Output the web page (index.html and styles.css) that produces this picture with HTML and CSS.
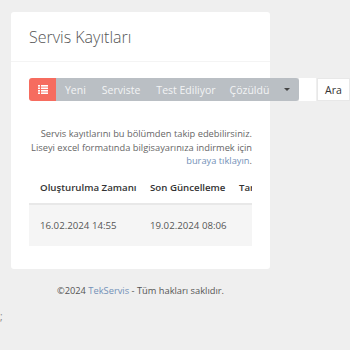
FILE: index.html
```html
<!DOCTYPE html>
<html lang="tr">
<head>
  <meta charset="UTF-8">
  <title>Servis Kayıtları</title>
  <link rel="stylesheet" href="styles.css">
</head>
<body>
  <div class="page">
    <div class="card">
      <div class="card-head">
        <h2>Servis Kayıtları</h2>
      </div>
      <div class="card-body">
        <div class="toolbar">
          <span class="tb-icon">
            <svg width="10" height="9" viewBox="0 0 10 9"><rect x="0" y="0" width="2" height="1.6" fill="#fff"/><rect x="3" y="0" width="7" height="1.6" fill="#fff"/><rect x="0" y="2.5" width="2" height="1.6" fill="#fff"/><rect x="3" y="2.5" width="7" height="1.6" fill="#fff"/><rect x="0" y="5" width="2" height="1.6" fill="#fff"/><rect x="3" y="5" width="7" height="1.6" fill="#fff"/><rect x="0" y="7.4" width="2" height="1.6" fill="#fff"/><rect x="3" y="7.4" width="7" height="1.6" fill="#fff"/></svg>
          </span>
          <div class="tb-tabs">
            <span class="tb-tab">Yeni</span>
            <span class="tb-tab">Serviste</span>
            <span class="tb-tab">Test Ediliyor</span>
            <span class="tb-tab">Çözüldü</span>
            <span class="tb-caret"></span>
          </div>
          <span class="tb-input"></span>
          <span class="tb-search">Ara</span>
        </div>

        <p class="info">
          Servis kayıtlarını bu bölümden takip edebilirsiniz.<br>
          Liseyi excel formatında bilgisayarınıza indirmek için<br>
          <a href="#">buraya tıklayın</a>.
        </p>

        <div class="table-wrap">
          <table>
            <colgroup>
              <col class="c1">
              <col class="c2">
              <col class="c3">
            </colgroup>
            <thead>
              <tr>
                <th>Oluşturulma Zamanı</th>
                <th>Son Güncelleme</th>
                <th>Tarih</th>
              </tr>
            </thead>
            <tbody>
              <tr>
                <td>16.02.2024 14:55</td>
                <td>19.02.2024 08:06</td>
                <td></td>
              </tr>
            </tbody>
          </table>
        </div>
      </div>
    </div>

    <footer>©2024 <a href="#">TekServis</a> - Tüm hakları saklıdır.</footer>
    <div class="stray">;</div>
  </div>
</body>
</html>
```

FILE: styles.css
```css
* {
  margin: 0;
  padding: 0;
  box-sizing: border-box;
}
body {
  background: #efefef;
  font-family: "Open Sans", sans-serif;
  color: #555;
  overflow: hidden;
}
.page {
  padding: 12px 0 0 11px;
}
.card {
  width: 259px;
  height: 257px;
  background: #fff;
  border-radius: 3px;
}
.card-head {
  height: 50px;
  padding: 14px 18px 0;
  border-bottom: 1px solid #f4f4f4;
}
.card-head h2 {
  font-weight: 300;
  font-size: 16px;
  color: #555;
  line-height: 22px;
}
.card-body {
  padding: 16px 18px 0;
}
.toolbar {
  display: flex;
  height: 23px;
  width: 321px;
  font-size: 10.5px;
}
.tb-icon {
  width: 27px;
  background: #f66c5f;
  border-radius: 3px 0 0 3px;
  display: flex;
  align-items: center;
  justify-content: center;
}
.tb-tabs {
  display: flex;
  align-items: center;
  background: #babfc4;
  width: 243px;
  padding-left: 9px;
  border-radius: 0 3px 3px 0;
}
.tb-tab {
  color: #f3f4f5;
  margin-right: 16px;
}
.tb-tab:nth-child(3) {
  margin-right: 14px;
}
.tb-caret {
  width: 0;
  height: 0;
  border-left: 3px solid transparent;
  border-right: 3px solid transparent;
  border-top: 3px solid #444;
  margin-left: -1px;
}
.tb-input {
  width: 17px;
  background: #fff;
}
.tb-search {
  flex: 1;
  background: #fff;
  border: 1px solid #e8e8e8;
  color: #333;
  display: flex;
  align-items: center;
  padding-left: 7px;
  margin-left: 1px;
}
.info {
  margin-top: 26px;
  text-align: right;
  font-size: 9.3px;
  line-height: 13.5px;
  color: #666;
  white-space: nowrap;
}
.info a, footer a {
  color: #7391b8;
  text-decoration: none;
}
.table-wrap {
  margin-top: 5px;
  overflow: hidden;
  width: 223px;
}
table {
  border-collapse: collapse;
  font-size: 9.7px;
  white-space: nowrap;
  table-layout: fixed;
  width: 260px;
}
.c1 {
  width: 110px;
}
.c2 {
  width: 89px;
}
.c3 {
  width: 61px;
}
th {
  text-align: left;
  font-weight: 600;
  color: #333;
  padding: 0 11px;
  height: 31px;
  border-bottom: 2px solid #e8e8e8;
}
td {
  background: #f5f5f5;
  color: #555;
  padding: 0 11px;
  height: 42px;
}
footer {
  width: 259px;
  text-align: center;
  font-size: 9.3px;
  color: #555;
  margin-top: 15px;
}
.stray {
  margin-left: -11px;
  margin-top: 12px;
  font-size: 10px;
  color: #888;
  width: 3px;
  overflow: hidden;
}
```
